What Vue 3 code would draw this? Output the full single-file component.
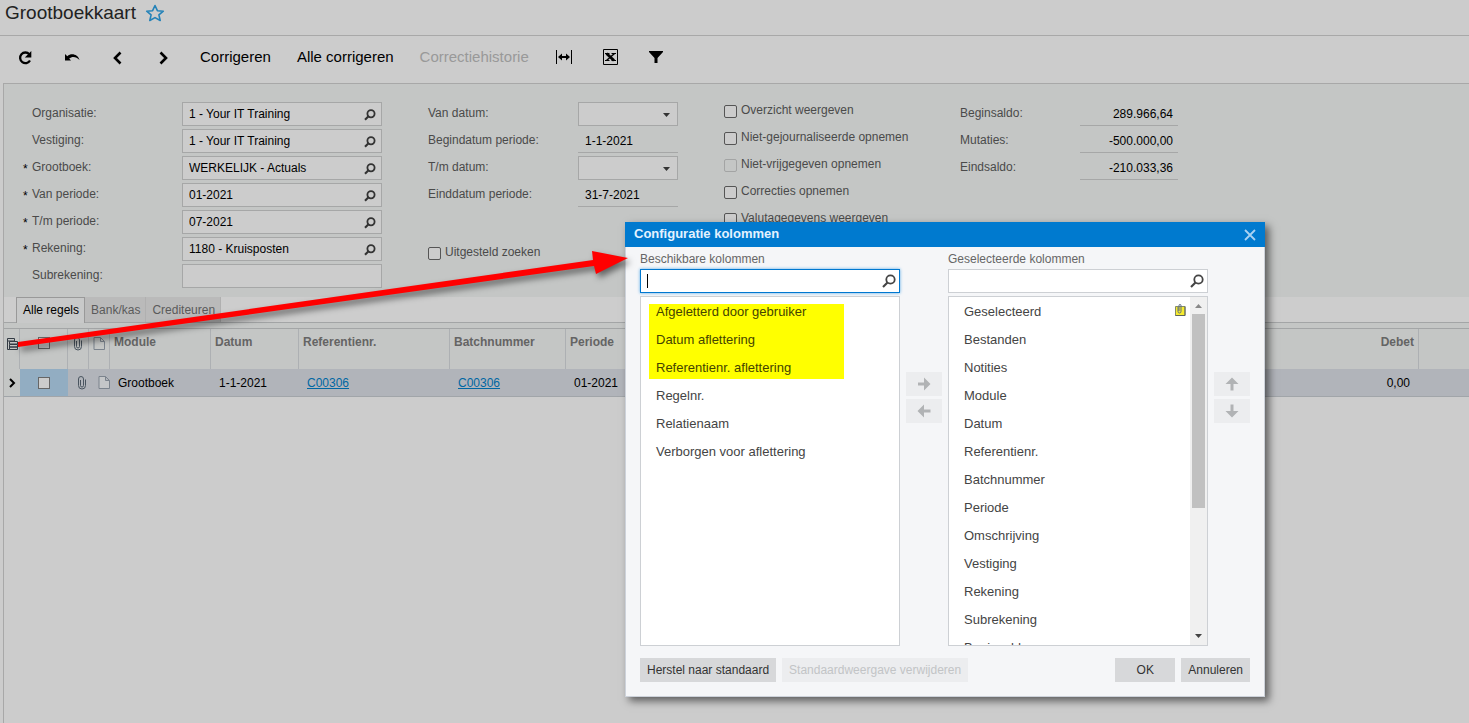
<script setup>
import { ref, onMounted } from 'vue'

const lookups = [
  { id: 'organisatie', label: 'Organisatie:', value: '1 - Your IT Training' },
  { id: 'vestiging', label: 'Vestiging:', value: '1 - Your IT Training' },
  { id: 'grootboek', label: 'Grootboek:', value: 'WERKELIJK - Actuals', required: true },
  { id: 'van-periode', label: 'Van periode:', value: '01-2021', required: true },
  { id: 'tm-periode', label: 'T/m periode:', value: '07-2021', required: true },
  { id: 'rekening', label: 'Rekening:', value: '1180 - Kruisposten', required: true },
  { id: 'subrekening', label: 'Subrekening:', value: '', plain: true },
]
const dates = [
  { id: 'van-datum', label: 'Van datum:', select: true },
  { id: 'begindatum', label: 'Begindatum periode:', value: '1-1-2021' },
  { id: 'tm-datum', label: 'T/m datum:', select: true },
  { id: 'einddatum', label: 'Einddatum periode:', value: '31-7-2021' },
]
const options = [
  { label: 'Overzicht weergeven' },
  { label: 'Niet-gejournaliseerde opnemen' },
  { label: 'Niet-vrijgegeven opnemen', disabled: true },
  { label: 'Correcties opnemen' },
  { label: 'Valutagegevens weergeven' },
]
const totals = [
  { label: 'Beginsaldo:', value: '289.966,64' },
  { label: 'Mutaties:', value: '-500.000,00' },
  { label: 'Eindsaldo:', value: '-210.033,36' },
]
const tabs = ['Alle regels', 'Bank/kas', 'Crediteuren']
const available = [
  'Afgeletterd door gebruiker', 'Datum aflettering', 'Referentienr. aflettering',
  'Regelnr.', 'Relatienaam', 'Verborgen voor aflettering',
]
const selected = [
  'Geselecteerd', 'Bestanden', 'Notities', 'Module', 'Datum', 'Referentienr.', 'Batchnummer',
  'Periode', 'Omschrijving', 'Vestiging', 'Rekening', 'Subrekening', 'Beginsaldo',
]
const searchBox = ref(null)
onMounted(() => searchBox.value.focus())
</script>

<template>
  <div class="page">
    <header class="titlebar">
      <h1>Grootboekkaart</h1>
      <button class="bare" aria-label="Favoriet">
        <svg width="20" height="18" viewBox="0 0 20 18"><path d="M10 1.500l2.400 5.200 5.900.5-4.400 3.700 1.300 5.600-5.200-2.900-5.200 2.900 1.300-5.600L1.700 7.200l5.900-.5z" fill="none" stroke="#2382b8" stroke-width="1.600" stroke-linejoin="round" /></svg>
      </button>
    </header>

    <nav class="toolbar">
      <div class="icons">
        <button aria-label="Vernieuwen">
          <svg width="18" height="18" viewBox="0 0 18 18"><path d="M13.300 5.200A5.300 5.300 0 1 0 14 11.500" fill="none" stroke="#000" stroke-width="2.300" /><path d="M15.300 2v6.500H8.800z" /></svg>
        </button>
        <button aria-label="Ongedaan maken">
          <svg width="18" height="18" viewBox="0 0 18 18"><path d="M3 5v6.500h6L7.200 9.600C10 7 14.500 7.500 17.500 11 16 5.500 9.500 3.500 5.300 7.200z" /></svg>
        </button>
        <button aria-label="Vorige">
          <svg width="18" height="18" viewBox="0 0 18 18"><path d="M12.500 3.500L7 9l5.500 5.500" fill="none" stroke="#000" stroke-width="2.600" /></svg>
        </button>
        <button aria-label="Volgende">
          <svg width="18" height="18" viewBox="0 0 18 18"><path d="M6.500 3.500L12 9l-5.500 5.500" fill="none" stroke="#000" stroke-width="2.600" /></svg>
        </button>
      </div>
      <div class="commands">
        <button>Corrigeren</button>
        <button>Alle corrigeren</button>
        <button disabled>Correctiehistorie</button>
      </div>
      <div class="icons">
        <button aria-label="Kolombreedte aanpassen">
          <svg width="18" height="18" viewBox="0 0 18 18"><path d="M1 1h1v14H1zM16 1h1v14h-1zM3 8l4-3.500V7h4V4.500L15 8l-4 3.500V9H7v2.500z" /></svg>
        </button>
        <button aria-label="Exporteren naar Excel">
          <svg width="18" height="18" viewBox="0 0 18 18"><path d="M2.500.5h14v15h-14z" fill="none" stroke="#000" /><path d="M5.500 4.500l7.500 7" stroke="#000" stroke-width="2.800" /><path d="M13.500 4.500L5.500 11.500" stroke="#000" stroke-width="1.500" /><path d="M4 4.500h4.500M10.500 4.500H15M4 11.500h4.500M10.500 11.500H15" stroke="#000" /></svg>
        </button>
        <button aria-label="Filter">
          <svg width="18" height="18" viewBox="0 0 18 18"><path d="M2 2h14v1l-5.500 6v5h-3V9L2 3z" /></svg>
        </button>
      </div>
    </nav>

    <main class="content">
      <form class="filters" @submit.prevent>
        <div class="column lookups">
          <div v-for="f in lookups" :key="f.id" class="row">
            <span class="star">{{ f.required ? '*' : '' }}</span>
            <label :for="f.id">{{ f.label }}</label>
            <div class="field">
              <input :id="f.id" type="text" :value="f.value" />
              <button v-if="!f.plain" type="button" class="lens" :aria-label="'Zoek ' + f.label">
                <svg width="12" height="12" viewBox="0 0 12 12"><circle cx="7" cy="4.800" r="3.600" fill="none" stroke="#333" stroke-width="1.800" /><path d="M4.500 7.300L1 10.800" stroke="#333" stroke-width="2.200" /></svg>
              </button>
            </div>
          </div>
        </div>
        <div class="column dates">
          <div v-for="f in dates" :key="f.id" class="row">
            <label :for="f.id">{{ f.label }}</label>
            <div v-if="f.select" class="field">
              <select :id="f.id"><option></option></select>
              <svg class="caret" width="7" height="4" viewBox="0 0 7 4"><path d="M0 0h7L3.500 4z" fill="#333" /></svg>
            </div>
            <output v-else :id="f.id">{{ f.value }}</output>
          </div>
          <label class="check deferred"><input type="checkbox" /><span>Uitgesteld zoeken</span></label>
        </div>
        <div class="column options">
          <label v-for="o in options" :key="o.label" class="check">
            <input type="checkbox" :disabled="o.disabled" /><span>{{ o.label }}</span>
          </label>
        </div>
        <div class="column totals">
          <div v-for="t in totals" :key="t.label" class="row">
            <span class="caption">{{ t.label }}</span>
            <output>{{ t.value }}</output>
          </div>
        </div>
      </form>

      <div class="tabs" role="tablist">
        <button v-for="(t, i) in tabs" :key="t" role="tab" class="tab" :class="{ active: i === 0 }">{{ t }}</button>
      </div>

      <div class="grid-wrap">
        <table>
          <colgroup>
            <col class="c-mark" /><col class="c-check" /><col class="c-small" /><col class="c-small" />
            <col class="c-module" /><col class="c-date" /><col class="c-ref" /><col class="c-batch" />
            <col class="c-period" /><col /><col class="c-last" />
          </colgroup>
          <thead>
            <tr>
              <th class="sym">
                <button class="bare config" aria-label="Configuratie kolommen">
                  <svg width="13" height="14" viewBox="0 0 13 14"><path d="M1.500 1.500h7v2.500h-7zM1.500 4v8.500h2M3.500 4.500h8v2.500h-8zM3.500 7.500h8v2.500h-8zM3.500 10h8v2.500h-8z" fill="none" stroke="#333b44" stroke-width="1" /></svg>
                </button>
              </th>
              <th class="sym"><input type="checkbox" class="square" aria-label="Alles selecteren" /></th>
              <th class="sym">
                <svg width="10" height="14" viewBox="0 0 10 14"><path d="M3.500 4v5.500a1.500 1.500 0 0 0 3 0V3a2.500 2.500 0 0 0-5 0v6.500a3.500 3.500 0 0 0 7 0V3.500" fill="none" stroke="#49545f" /></svg>
              </th>
              <th class="sym">
                <svg width="12" height="13" viewBox="0 0 12 13"><path d="M1 .5h6.500l4 4v8H1zM7.500.5v4h4" fill="none" stroke="#7b838d" /></svg>
              </th>
              <th>Module</th><th>Datum</th><th>Referentienr.</th><th>Batchnummer</th><th class="open">Periode</th>
              <th class="num">Debet</th><th class="open"></th>
            </tr>
          </thead>
          <tbody>
            <tr>
              <td class="sym mark">
                <svg width="8" height="10" viewBox="0 0 8 10"><path d="M2 1l4 4-4 4" fill="none" stroke="#000" stroke-width="2" /></svg>
              </td>
              <td class="sym picked"><input type="checkbox" class="square" aria-label="Regel selecteren" /></td>
              <td class="sym late">
                <svg width="10" height="14" viewBox="0 0 10 14"><path d="M3.500 4v5.500a1.500 1.500 0 0 0 3 0V3a2.500 2.500 0 0 0-5 0v6.500a3.500 3.500 0 0 0 7 0V3.500" fill="none" stroke="#49545f" /></svg>
              </td>
              <td class="sym late">
                <svg width="12" height="13" viewBox="0 0 12 13"><path d="M1 .5h6.500l4 4v8H1zM7.500.5v4h4" fill="#c4c6c8" stroke="#7b838d" /></svg>
              </td>
              <td>Grootboek</td><td>1-1-2021</td><td><a href="#">C00306</a></td><td><a href="#">C00306</a></td>
              <td>01-2021</td><td class="num">0,00</td><td></td>
            </tr>
          </tbody>
        </table>
      </div>
    </main>

    <section class="dialog" role="dialog" aria-labelledby="dialog-title">
      <header class="dialog-head">
        <h2 id="dialog-title">Configuratie kolommen</h2>
        <button class="bare" aria-label="Sluiten">
          <svg width="12" height="12" viewBox="0 0 12 12"><path d="M1 1l10 10M11 1L1 11" stroke="#a9d2f2" stroke-width="1.800" /></svg>
        </button>
      </header>
      <div class="dialog-body">
        <div class="picker">
          <label for="search-available">Beschikbare kolommen</label>
          <div class="search focused">
            <input id="search-available" ref="searchBox" type="text" />
            <span class="cursor"></span>
            <svg width="14" height="14" viewBox="0 0 14 14"><circle cx="8.500" cy="5.500" r="4.200" fill="none" stroke="#444" stroke-width="1.800" /><path d="M5.500 8.500L1 13" stroke="#444" stroke-width="2.200" /></svg>
          </div>
          <div class="listbox">
            <ul><li v-for="a in available" :key="a">{{ a }}</li></ul>
            <div class="highlight"></div>
          </div>
        </div>
        <div class="movers">
          <button disabled aria-label="Toevoegen"><svg width="14" height="14" viewBox="0 0 14 14"><path d="M1 5.500h6V.5l6.500 6.500L7 13.500V8.500H1z" fill="#b1b3b5" /></svg></button>
          <button disabled aria-label="Verwijderen"><svg width="14" height="14" viewBox="0 0 14 14"><path d="M13.500 5.500H7V.5L.5 7 7 13.500V8.500h6.500z" fill="#b1b3b5" /></svg></button>
        </div>
        <div class="picker">
          <label for="search-selected">Geselecteerde kolommen</label>
          <div class="search">
            <input id="search-selected" type="text" />
            <svg width="14" height="14" viewBox="0 0 14 14"><circle cx="8.500" cy="5.500" r="4.200" fill="none" stroke="#444" stroke-width="1.800" /><path d="M5.500 8.500L1 13" stroke="#444" stroke-width="2.200" /></svg>
          </div>
          <div class="listbox">
            <ul>
              <li v-for="(s, i) in selected" :key="s">
                <span>{{ s }}</span>
                <svg v-if="i === 0" width="11" height="12" viewBox="0 0 11 12"><path d="M.5 2.500h9.500v9H.5z" fill="#f7ec2e" stroke="#858b66" /><path d="M10 2.500v9H.5" fill="none" stroke="#5e655a" /><path d="M3 3v4.500a1.500 1.500 0 0 0 3 0V1.500a1 1 0 0 0-2 0V7" fill="none" stroke="#5b6b86" /></svg>
              </li>
            </ul>
            <div class="scrollbar">
              <svg width="7" height="4" viewBox="0 0 7 4"><path d="M0 4h7L3.500 0z" fill="#888" /></svg>
              <div class="thumb"></div>
              <svg width="7" height="4" viewBox="0 0 7 4"><path d="M0 0h7L3.500 4z" fill="#444" /></svg>
            </div>
          </div>
        </div>
        <div class="movers">
          <button disabled aria-label="Omhoog"><svg width="14" height="14" viewBox="0 0 14 14"><path d="M7 .5l6.500 6.500H8.500v6.500H5.500V7H.5z" fill="#b1b3b5" /></svg></button>
          <button disabled aria-label="Omlaag"><svg width="14" height="14" viewBox="0 0 14 14"><path d="M7 13.500L13.500 7H8.500V.5H5.500V7H.5z" fill="#b1b3b5" /></svg></button>
        </div>
      </div>
      <footer class="dialog-foot">
        <button>Herstel naar standaard</button>
        <button disabled>Standaardweergave verwijderen</button>
        <span class="spring"></span>
        <button class="ok">OK</button>
        <button>Annuleren</button>
      </footer>
    </section>

    <svg class="pointer" width="660" height="370" viewBox="0 0 660 370">
      <path d="M18 342L593 260L592 251L628 258L596 274L594 266L18 347z" fill="#f00" />
    </svg>
  </div>
</template>

<style>
html,
body {
  margin: 0;
  background: #ccc;
}
</style>

<style scoped>
.page {
  position: relative;
  min-height: 100vh;
  overflow: hidden;
  display: flex;
  flex-direction: column;
  background: #ccc;
  color: #000;
  font: 12px "Liberation Sans", Arial, sans-serif;
}
.page * { box-sizing: border-box; }
button, input, select { font: inherit; color: inherit; margin: 0; }
button { padding: 0; border: 0; background: none; }
svg { display: block; flex: none; }
.bare { display: block; }

.titlebar {
  display: flex;
  align-items: center;
  gap: 9px;
  height: 36px;
  padding: 0 5px 9px;
  border-bottom: 1px solid #a8a8a8;
}
h1 { margin: 0; font-size: 19px; font-weight: normal; color: #222; }

.toolbar { display: flex; align-items: center; height: 47px; padding: 0 16px 4px; }
.icons { display: flex; gap: 28px; }
.commands { display: flex; gap: 26px; margin: 0 26px 0 28px; padding-bottom: 2px; font-size: 15px; }
.commands button:disabled { color: #999; }

.content {
  flex: 1;
  display: flex;
  flex-direction: column;
  margin-left: 3px;
  border-left: 1px solid #a8a8a8;
}
.filters {
  display: flex;
  gap: 46px;
  padding: 18px 0 9px 19px;
  border-top: 1px solid #a8a8a8;
  background: #c4c6c5;
}
.column { display: flex; flex-direction: column; gap: 3px; flex: none; }
.row { display: flex; height: 24px; color: #4a4a4a; }
.row label, .caption { line-height: 22px; }
.star { width: 9px; color: #000; line-height: 26px; }
.lookups label { width: 150px; }
.field { position: relative; display: flex; width: 200px; color: #000; }
.field input, .field select {
  flex: 1;
  min-width: 0;
  height: 24px;
  padding: 0 24px 0 6px;
  border: 1px solid #a6a7a7;
  border-radius: 0;
  background: #ccc;
  appearance: none;
  outline: none;
}
.lens { position: absolute; right: 6px; top: 7px; }
.caret { position: absolute; right: 8px; top: 11px; pointer-events: none; }
.dates label { width: 150px; }
.dates .field { width: 100px; }
output { border-bottom: 1px solid #a6a7a7; color: #000; line-height: 24px; }
.dates output { width: 100px; padding-left: 7px; }
.options { width: 190px; margin-top: -3px; }
.check { display: flex; gap: 4px; height: 24px; color: #4a4a4a; line-height: 22px; }
.check input {
  flex: none;
  width: 13px;
  height: 13px;
  margin-top: 6px;
  border: 1px solid #555;
  border-radius: 2px;
  background: #ccc;
  appearance: none;
}
.check input:disabled { border-color: #a3a4a4; background: none; }
.dates .deferred { width: auto; margin-top: 31px; }
.totals .caption { width: 120px; }
.totals output { width: 98px; padding-right: 5px; text-align: right; }

.tabs { display: flex; height: 26px; padding-left: 12px; background: #cdcdcd; border-bottom: 1px solid #a3a5a6; }
.tab { height: 25px; padding: 0 5px 0 6px; border-right: 1px solid #b0b0b0; background: #bababa; color: #5a5a5a; }
.tab.active {
  height: 26px;
  padding-bottom: 1px;
  border: 1px solid #999;
  border-bottom: 0;
  background: #c8c9c9;
  color: #000;
}
.grid-wrap { padding-top: 5px; background: #c4c6c5; }
table { width: 100%; table-layout: fixed; border-collapse: separate; border-spacing: 0; border-top: 1px solid #a3a5a6; }
.c-mark { width: 16px; }
.c-check { width: 48px; }
.c-small { width: 21px; }
.c-module { width: 101px; }
.c-date { width: 88px; }
.c-ref { width: 151px; }
.c-batch { width: 116px; }
.c-period { width: 100px; }
.c-last { width: 50px; }
th {
  height: 40px;
  padding: 6px 4px 0;
  border-right: 1px solid #adb0b3;
  color: #646464;
  font-size: 12px;
  text-align: left;
  vertical-align: top;
}
th.open { border-right: 0; }
td { height: 28px; padding: 0 8px; border-bottom: 1px solid #a1a5a9; background: #b1b4ba; vertical-align: middle; }
th.num { text-align: right; }
td.num { padding-right: 9px; text-align: right; }
.sym { padding: 0; }
th.sym { padding-top: 8px; }
.sym svg, .sym .square { display: block; margin: 0 auto; }
.config { margin-left: 2px; }
.late svg { margin: 0 0 0 9px; }
td.mark { background: #c4c6c5; }
td.picked { background: #92adc2; }
.square { width: 12px; height: 12px; border: 1px solid #666; border-radius: 0; background: #ccc; appearance: none; }
a { color: #0067a3; }

.dialog {
  position: absolute;
  left: 625px;
  top: 222px;
  width: 640px;
  background: #f5f6f8;
  box-shadow: 4px 4px 8px rgba(0, 0, 0, 0.55);
}
.dialog-head {
  display: flex;
  align-items: center;
  justify-content: space-between;
  height: 25px;
  padding: 0 9px;
  background: #007acf;
  color: #e3f2ff;
}
h2 { margin: 0; padding-bottom: 2px; font-size: 13px; font-weight: bold; }
.dialog-body { display: flex; gap: 6px; padding: 0 14px; border: solid #cdd2da; border-width: 0 1px; color: #666; }
.picker { width: 260px; }
.picker label { display: block; height: 22px; line-height: 24px; }
.search { position: relative; display: flex; align-items: center; height: 24px; padding-right: 3px; border: 1px solid #cdd0d4; background: #fff; }
.search.focused { border-color: #0078d0; box-shadow: 0 0 3px #5aaae6; }
.search input { flex: 1; min-width: 0; height: 22px; padding: 0 6px; border: 0; outline: 0; background: none; caret-color: transparent; }
.cursor { position: absolute; left: 6px; top: 4px; width: 1px; height: 14px; background: #000; }
.listbox { position: relative; display: flex; height: 350px; margin-top: 3px; border: 1px solid #cdd0d4; background: #fff; overflow: hidden; }
ul { flex: 1; margin: 0; padding: 1px 0 0; list-style: none; }
li { display: flex; justify-content: space-between; height: 28px; padding: 0 4px 0 15px; line-height: 28px; font-size: 13px; color: #444; }
li svg { margin-top: 6px; }
.highlight { position: absolute; left: 8px; top: 7px; width: 195px; height: 75px; background: #ff0; mix-blend-mode: multiply; }
.scrollbar { display: flex; flex-direction: column; align-items: center; justify-content: space-between; width: 17px; padding: 7px 0; background: #f0f0f0; }
.thumb { width: 13px; height: 194px; margin: 6px 0 auto; background: #c1c1c1; }
.movers { display: flex; flex-direction: column; gap: 3px; width: 36px; padding-top: 125px; }
.movers button { display: flex; align-items: center; justify-content: center; height: 24px; background: #ecedef; }
.dialog-foot { display: flex; gap: 6px; padding: 12px 14px 14px; border: 1px solid #cdd2da; border-top: 0; }
.dialog-foot button { height: 24px; padding: 0 7px; background: #d7d8da; color: #333; }
.dialog-foot button:disabled { background: #ecedef; color: #c2c4c6; }
.dialog-foot .ok { width: 60px; }
.spring { flex: 1; }

.pointer { position: absolute; left: 0; top: 0; pointer-events: none; filter: drop-shadow(3px 4px 3px rgba(0, 0, 0, 0.5)); }
</style>
